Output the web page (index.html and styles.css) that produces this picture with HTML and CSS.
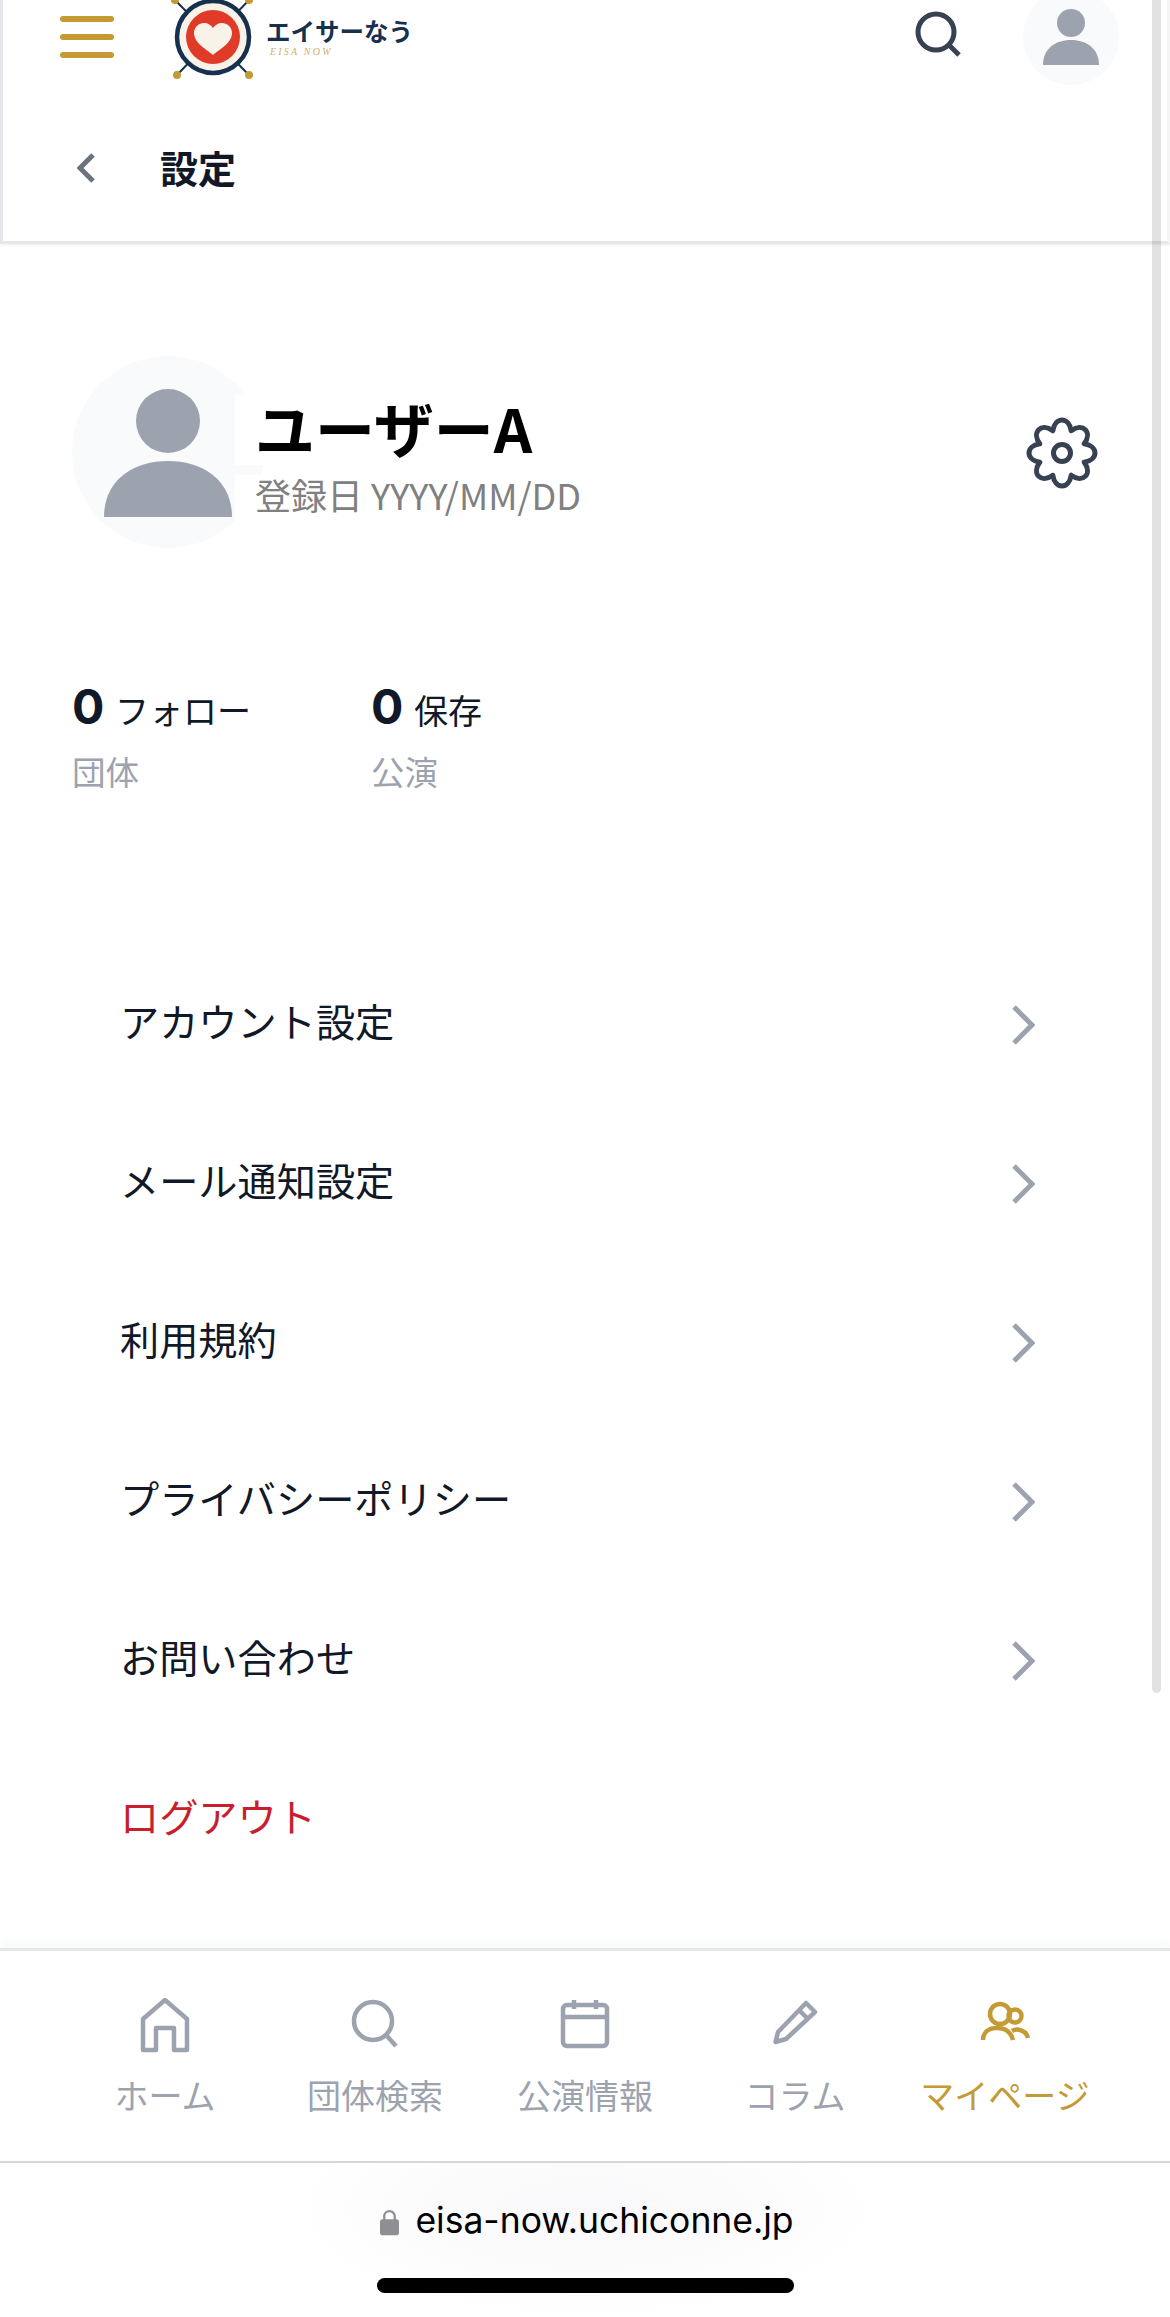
FILE: index.html
```html
<!DOCTYPE html>
<html lang="ja">
<head>
    <meta charset="UTF-8">
    <meta name="viewport" content="width=device-width, initial-scale=1.0">
    <title>設定</title>
    <link rel="stylesheet" href="styles.css">
</head>
<body>
    <div class="scrollbar"></div>
    <header class="site-header">
        <div class="top-row">
            <div class="hamburger"><span></span><span></span><span></span></div>
            <svg class="logo-mark" viewBox="0 0 90 90">
                <path d="M5 0L79 75M79 0L7 75" stroke="#16304d" stroke-width="2"/>
                <circle cx="5" cy="0" r="4" fill="#c49a35"/>
                <circle cx="79" cy="0" r="4" fill="#c49a35"/>
                <circle cx="7" cy="75" r="4" fill="#c49a35"/>
                <circle cx="79" cy="75" r="4" fill="#c49a35"/>
                <circle cx="43" cy="37" r="36" fill="#f8f2e8" stroke="#16304d" stroke-width="4.500"/>
                <circle cx="43" cy="37" r="27" fill="#e03a28"/>
                <path d="M43 55C36 49 24 43 24 33C24 27 29 23 34 23C38 23 41 25 43 28C45 25 48 23 52 23C57 23 62 27 62 33C62 43 50 49 43 55Z" fill="#f8f2e8"/>
            </svg>
            <div class="logo-text">
                <div class="logo-name">エイサーなう</div>
                <div class="logo-sub">EISA NOW</div>
            </div>
            <svg class="header-search" viewBox="0 0 48 48">
                <circle cx="22" cy="22" r="18" fill="none" stroke="#374151" stroke-width="5"/>
                <path d="M35 35L45 45" stroke="#374151" stroke-width="5"/>
            </svg>
            <div class="header-avatar">
                <svg viewBox="0 0 96 96"><circle cx="48" cy="34" r="14" fill="#9ca3af"/><path d="M20 76C20 60 32 51 48 51C64 51 76 60 76 76Z" fill="#9ca3af"/></svg>
            </div>
        </div>
        <div class="title-row">
            <svg class="back" viewBox="0 0 18 30"><path d="M16 2L3 15L16 28" fill="none" stroke="#6b7280" stroke-width="5"/></svg>
            <h1>設定</h1>
        </div>
    </header>

    <section class="profile">
        <div class="avatar">
            <svg viewBox="0 0 192 192"><circle cx="96" cy="65" r="32" fill="#9ca3af"/><path d="M32 161C32 125 60 105 96 105C132 105 160 125 160 161Z" fill="#9ca3af"/></svg>
        </div>
        <div class="profile-info">
            <div class="user-name">ユーザーA</div>
            <div class="user-date">登録日 YYYY/MM/DD</div>
        </div>
        <svg class="gear" viewBox="-42 -42 84 84">
            <path d="M-9.200 -22.200C-7 -36.600 7 -36.600 9.200 -22.200C20.900 -30.800 30.800 -20.900 22.200 -9.200C36.600 -7 36.600 7 22.200 9.200C30.800 20.900 20.900 30.800 9.200 22.200C7 36.600 -7 36.600 -9.200 22.200C-20.900 30.800 -30.800 20.900 -22.200 9.200C-36.600 7 -36.600 -7 -22.200 -9.200C-30.800 -20.900 -20.900 -30.800 -9.200 -22.200Z"/>
            <circle r="8.500"/>
        </svg>
    </section>

    <section class="stats">
        <div class="stat">
            <div class="stat-top"><span class="stat-num">0</span><span class="stat-label">フォロー</span></div>
            <div class="stat-sub">団体</div>
        </div>
        <div class="stat">
            <div class="stat-top"><span class="stat-num">0</span><span class="stat-label">保存</span></div>
            <div class="stat-sub">公演</div>
        </div>
    </section>

    <ul class="menu">
        <li>アカウント設定<svg class="chevron" viewBox="0 0 24 40"><path d="M3 2L21 20L3 38"/></svg></li>
        <li>メール通知設定<svg class="chevron" viewBox="0 0 24 40"><path d="M3 2L21 20L3 38"/></svg></li>
        <li>利用規約<svg class="chevron" viewBox="0 0 24 40"><path d="M3 2L21 20L3 38"/></svg></li>
        <li>プライバシーポリシー<svg class="chevron" viewBox="0 0 24 40"><path d="M3 2L21 20L3 38"/></svg></li>
        <li>お問い合わせ<svg class="chevron" viewBox="0 0 24 40"><path d="M3 2L21 20L3 38"/></svg></li>
        <li class="logout">ログアウト</li>
    </ul>

    <nav class="bottom-nav">
        <div class="nav-item">
            <svg viewBox="0 0 52 56"><path d="M4 53V22L26 3L48 22V53H35V31H17V53Z"/></svg>
            <span>ホーム</span>
        </div>
        <div class="nav-item">
            <svg viewBox="0 0 52 56"><circle cx="24" cy="24" r="19"/><path d="M37 38L47 49"/></svg>
            <span>団体検索</span>
        </div>
        <div class="nav-item">
            <svg viewBox="0 0 52 56"><rect x="4" y="8" width="44" height="41" rx="4"/><path d="M4 20H48M15 3V12M37 3V12"/></svg>
            <span>公演情報</span>
        </div>
        <div class="nav-item">
            <svg viewBox="0 0 52 56"><path d="M6.500 45L9 35L37 6L46 15L17 42ZM30 13L39 22"/></svg>
            <span>コラム</span>
        </div>
        <div class="nav-item active">
            <svg viewBox="0 0 52 56"><circle cx="21" cy="17" r="10"/><circle cx="36" cy="19" r="6.500"/><path d="M4 43C4 35 10 31 18 31C26 31 32 35 34 43M33 34C38 31 47 33 49 41"/></svg>
            <span>マイページ</span>
        </div>
    </nav>

    <footer class="browser-bar">
        <div class="url-row">
            <svg class="lock" viewBox="0 0 20 28"><path d="M4.500 13V8a5.500 5.500 0 0111 0v5" fill="none" stroke="#8e8e93" stroke-width="2.400"/><rect y="11" width="20" height="17" rx="3" fill="#8e8e93"/></svg>
            <span>eisa-now.uchiconne.jp</span>
        </div>
        <div class="home-indicator"></div>
    </footer>
</body>
</html>
```

FILE: styles.css
```css
html, body {
    margin: 0;
    padding: 0;
}
body {
    position: relative;
    width: 1170px;
    height: 2317px;
    overflow: hidden;
    background-color: white;
    color: #111827;
    font-family: "Noto Sans CJK JP", "Noto Sans", sans-serif;
}
.scrollbar {
    position: absolute;
    top: 0;
    left: 1152px;
    width: 9px;
    height: 1693px;
    border-radius: 0 0 5px 5px;
    background-color: rgba(0,0,0,0.115);
}

/* Header */
.site-header {
    height: 241px;
    border-left: 3px solid #e5e7eb;
    border-right: 3px solid #f5f5f6;
    border-bottom: 3px solid #e5e7eb;
    box-shadow: 0 2px 2px #f3f4f6;
}
.top-row {
    display: flex;
    align-items: center;
    height: 74px;
    padding-left: 57px;
}
.hamburger {
    display: flex;
    flex-direction: column;
    gap: 12px;
    width: 54px;
}
.hamburger span {
    height: 6px;
    border-radius: 3px;
    background-color: #c49a35;
}
.logo-mark {
    flex: none;
    width: 90px;
    height: 90px;
    margin: 0 0 0 56px;
    overflow: visible;
    align-self: flex-start;
}
.logo-text {
    margin: 0 0 0 6px;
    width: 146px;
}
.logo-name {
    font-size: 24.5px;
    font-weight: 700;
    line-height: 28px;
    white-space: nowrap;
    color: #16304d;
}
.logo-sub {
    margin: 2px 0 0 4px;
    font-family: "Liberation Serif", serif;
    font-style: italic;
    font-size: 10px;
    line-height: 10px;
    letter-spacing: 2.2px;
    color: #cdb070;
}
.header-search {
    width: 48px;
    height: 48px;
    margin: -6px 0 0 502px;
}
.header-avatar {
    flex: none;
    width: 96px;
    height: 96px;
    margin-left: 61px;
    border-radius: 50%;
    background-color: #f9fafb;
}
.header-avatar svg {
    display: block;
}
.title-row {
    display: flex;
    align-items: center;
    height: 60px;
    margin-top: 63px;
    padding-left: 74px;
}
.back {
    width: 18px;
    height: 30px;
    margin-top: 2px;
}
h1 {
    margin: 0 0 0 65px;
    font-size: 38px;
    font-weight: 700;
    line-height: 60px;
}

/* Profile */
.profile {
    display: flex;
    margin-top: 112px;
    padding-left: 72px;
}
.avatar {
    flex: none;
    width: 192px;
    height: 192px;
    border-radius: 50%;
    background-color: #f9fafb;
}
.avatar svg {
    display: block;
}
.profile-info {
    flex: none;
    width: 400px;
    margin: 39px 0 0 -29px;
}
.user-name {
    width: 100%;
    height: 70px;
    padding-left: 20px;
    box-sizing: border-box;
    font-size: 60px;
    font-weight: 700;
    line-height: 64px;
    color: black;
    background-color: white;
}
.user-date {
    height: 58px;
    margin-top: 10px;
    padding-left: 20px;
    font-size: 36px;
    line-height: 38px;
    color: #808080;
    background-color: white;
}
.gear {
    width: 84px;
    height: 84px;
    margin: 55px 0 0 385px;
    fill: none;
    stroke: #374151;
    stroke-width: 5;
    stroke-linejoin: round;
}

/* Stats */
.stats {
    display: flex;
    margin-top: 129px;
    padding-left: 72px;
}
.stat {
    width: 299px;
}
.stat-top {
    display: flex;
    align-items: center;
    height: 58px;
}
.stat-num {
    width: 43px;
    font-family: Inter, sans-serif;
    font-size: 48px;
    font-weight: 700;
}
.stat-label {
    padding-top: 6px;
    font-size: 34px;
}
.stat-sub {
    margin-top: 13px;
    font-size: 33.5px;
    line-height: 46px;
    color: #9ca3af;
}

/* Menu */
.menu {
    margin: 146px 0 0;
    padding: 0 135px 0 120px;
    list-style: none;
}
.menu li {
    display: flex;
    align-items: center;
    justify-content: space-between;
    height: 159px;
    font-size: 39.2px;
}
.menu .logout {
    color: #c81e2e;
}
.chevron {
    width: 24px;
    height: 40px;
    margin-top: 10px;
}
.chevron path {
    fill: none;
    stroke: #9ca3af;
    stroke-width: 5;
}

/* Bottom nav */
.bottom-nav {
    position: absolute;
    top: 1948px;
    left: 0;
    right: 0;
    display: grid;
    grid-template-columns: repeat(5, 210px);
    height: 210px;
    padding-left: 60px;
    border-top: 3px solid #e5e7eb;
    box-shadow: 0 -8px 8px #f9fafb;
    background-color: white;
}
.nav-item {
    display: flex;
    flex-direction: column;
    align-items: center;
    padding-top: 46px;
    color: #9ca3af;
    font-size: 34px;
    line-height: 46px;
}
.nav-item svg {
    width: 52px;
    height: 56px;
    margin-bottom: 19px;
    fill: none;
    stroke: #9ca3af;
    stroke-width: 4.5;
    stroke-linejoin: round;
}
.nav-item.active {
    color: #c49a35;
}
.nav-item.active svg {
    stroke: #c49a35;
}

/* Browser bar */
.browser-bar {
    position: absolute;
    top: 2161px;
    left: 0;
    right: 0;
    bottom: 0;
    border-top: 2px solid #d6d6d8;
    background: radial-gradient(ellipse 300px 110px at 50% 30%, #f8f8fa, white);
}
.url-row {
    display: flex;
    align-items: center;
    justify-content: center;
    gap: 16px;
    height: 38px;
    margin-top: 38px;
    padding-left: 4px;
    font-family: Inter, sans-serif;
    font-size: 35.5px;
    color: black;
}
.lock {
    width: 19px;
    height: 28px;
    margin-top: 3px;
}
.home-indicator {
    width: 417px;
    height: 15px;
    margin: 39px 0 0 377px;
    border-radius: 8px;
    background-color: black;
}
```
